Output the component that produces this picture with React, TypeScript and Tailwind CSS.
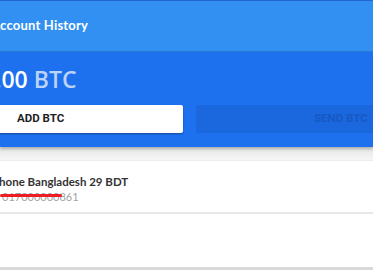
import React from "react";

export default function App() {
  return (
    <div className="w-[373px] h-[270px] overflow-hidden bg-[#f3f3f3] flex flex-col" style={{ fontFamily: 'Lato, "Open Sans", sans-serif' }}>
      <div className="h-px bg-[#2466cf] shrink-0" />
      <div className="h-[51px] shrink-0 bg-[#3190f2] border-b border-[#2a79d8] flex items-center">
        <span className="ml-[-9px] text-[13px] font-bold text-white tracking-[0.2px]">Account History</span>
      </div>
      <div className="h-[95px] shrink-0 bg-[#1d71ee] flex flex-col shadow-[0_2px_3px_rgba(0,0,0,0.25)] relative z-10">
        <div className="mt-[12px] ml-[-18px] text-[23px] leading-[30px] font-semibold" style={{ fontFamily: '"Open Sans", sans-serif' }}>
          <span className="text-white">0.00</span>
          <span className="text-[#bcd3f7]"> BTC</span>
        </div>
        <div className="mt-[11px] flex gap-[13px]" style={{ fontFamily: "Roboto, sans-serif" }}>
          <div className="ml-[-10px] w-[193px] h-[28px] shrink-0 bg-white rounded-[2px] shadow-[0_1px_2px_rgba(0,0,0,0.35)] flex items-center pl-[27px] text-[11.5px] font-bold text-[#1f1f1f]">
            ADD BTC
          </div>
          <div className="w-[200px] h-[28px] shrink-0 bg-[#1b67dd] rounded-[2px] flex items-center pl-[118px] text-[11.5px] font-bold text-[#1659c6]">
            SEND BTC
          </div>
        </div>
      </div>
      <div className="h-[13px] shrink-0 bg-gradient-to-b from-[#e6e6e6] to-[#f6f6f6]" />
      <div className="h-[110px] shrink-0 bg-white border-t border-[#ececec] border-b-[3px] border-b-[#d9d9d9] flex flex-col">
        <div className="h-[53px] border-b-2 border-[#e8e8e8] flex flex-col pt-[13px]">
          <div className="ml-[-8px] text-[11.5px] leading-[16px] font-bold text-[#333]">Phone Bangladesh 29 BDT</div>
          <div className="relative ml-[2px] text-[11px] leading-[13px] text-[#a3a3a3]">
            017000000861
            <div className="absolute left-[-2px] top-[4px] w-[62px] h-[3px] bg-[#ee1c25] rounded-full" />
          </div>
        </div>
      </div>
    </div>
  );
}
